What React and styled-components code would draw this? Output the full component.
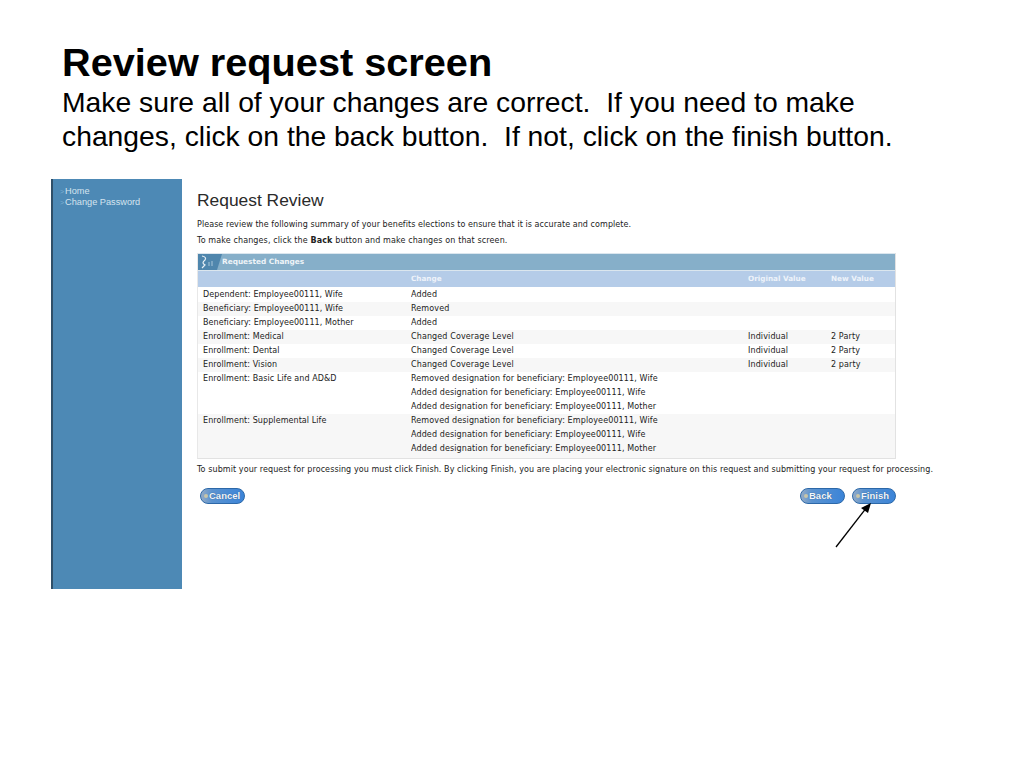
import React from "react";
import styled, { createGlobalStyle } from "styled-components";

const Global = createGlobalStyle`
  html, body { margin: 0; padding: 0; background: #fff; }
  body { font-family: "Liberation Sans", Arial, sans-serif; color: #000; }
`;
const Slide = styled.div`
  position: relative; width: 1024px; height: 768px; overflow: hidden; background: #fff;
  display: flex; flex-direction: column;
`;
const Intro = styled.header`padding: 39px 0 0 62px; height: 179px; box-sizing: border-box;`;
const Heading = styled.h1`margin: 0; font-size: 39.7px; line-height: 46px; font-weight: 700; color: #000;`;
const Lead = styled.p`margin: 0; width: 950px; font-size: 28.3px; line-height: 34px; white-space: pre-wrap; color: #000;`;
const Screen = styled.div`display: flex; margin-left: 51px; height: 410px;`;
const Sidebar = styled.nav`
  width: 131px; flex: none; background: #4d89b5; border-left: 2px solid #2f4f68; padding: 7px 0 0 7px; box-sizing: border-box;
  margin-right: 15px;
`;
const NavLink = styled.div`
  font: 9.2px/11px "Liberation Sans", Arial, sans-serif; color: #d5e4ef; white-space: nowrap;
  &::before { content: ">"; color: #7fb0d2; margin-right: 1px; font-size: 7px; }
`;
const Main = styled.main`width: 750px; flex: none; font: 8px/14px "DejaVu Sans", Verdana, sans-serif; color: #222;`;
const Title = styled.h2`margin: 11px 0 0; font: 400 17.4px/20px "Liberation Sans", Arial, sans-serif; color: #2a2a2a;`;
const Para = styled.p`margin: ${p => p.$top || 0}px 0 0; font-size: 8px; line-height: 14px; white-space: nowrap; color: #222; letter-spacing: ${p => p.$ls || 0}px;`;
const Panel = styled.section`width: 699px; margin-top: 5px; border-right: 1px solid #e2e2e2; border-bottom: 1px solid #e2e2e2; border-left: 1px solid #e8e8e8; box-sizing: border-box;`;
const TitleBar = styled.div`
  height: 16px; background: #86afc9; border-top: 1px solid #dbe6ee; display: flex; align-items: center;
  color: #eef4f8; font-weight: 700; font-size: 7.35px;
`;
const Badge = styled.svg`width: 24px; height: 16px; flex: none;`;
const Grid = styled.div`display: grid; grid-template-columns: 213px 337px 83px 64px; border-top: 1px solid #dbe6ee;`;
const Head = styled.div`
  height: 16px; line-height: 16px; background: #b5cce8; color: #eef3fa; font-weight: 700; font-size: 7.25px;
  white-space: nowrap; margin-bottom: 1px;
`;
const Cell = styled.div`
  height: ${p => p.$h || 14}px; line-height: 14px; padding-left: ${p => p.$pad || 0}px; background: ${p => (p.$alt ? "#f7f7f7" : "#fff")};
  white-space: pre; letter-spacing: ${p => (p.$pad ? 0.08 : 0.12)}px; overflow: hidden; color: #222;
`;
const Actions = styled.div`display: flex; justify-content: space-between; width: 699px; margin-top: 11px; padding-left: 3px; box-sizing: border-box;`;
const Group = styled.div`display: flex; gap: 7px;`;
const Pill = styled.button`
  position: relative; height: 16px; width: ${p => p.$w}px; border: 1px solid #2c68a8; border-radius: 8px; padding: 0 0 0 8px; margin: 0;
  background: linear-gradient(90deg, #94abc6 0, #5b93d0 25%, #3b84d8 100%);
  color: #f2f6fb; font: 700 9.5px/14px "Liberation Sans", Arial, sans-serif; text-align: left; box-sizing: border-box;
  text-shadow: 0 0 1px #24507f;
  &::before { content: ""; position: absolute; left: 3px; top: 5px; width: 4px; height: 4px; border-radius: 50%; background: #c9c6a8; }
`;
const Arrow = styled.svg`position: absolute; left: 830px; top: 498px; width: 50px; height: 54px;`;

const rows = [
  ["Dependent: Employee00111, Wife", "Added", "", ""],
  ["Beneficiary: Employee00111, Wife", "Removed", "", ""],
  ["Beneficiary: Employee00111, Mother", "Added", "", ""],
  ["Enrollment: Medical", "Changed Coverage Level", "Individual", "2 Party"],
  ["Enrollment: Dental", "Changed Coverage Level", "Individual", "2 Party"],
  ["Enrollment: Vision", "Changed Coverage Level", "Individual", "2 party"],
  ["Enrollment: Basic Life and AD&D", "Removed designation for beneficiary: Employee00111, Wife\nAdded designation for beneficiary: Employee00111, Wife\nAdded designation for beneficiary: Employee00111, Mother", "", "", 42],
  ["Enrollment: Supplemental Life", "Removed designation for beneficiary: Employee00111, Wife\nAdded designation for beneficiary: Employee00111, Wife\nAdded designation for beneficiary: Employee00111, Mother", "", "", 44],
];

export default function App() {
  return (
    <Slide>
      <Global />
      <Intro>
        <Heading>Review request screen</Heading>
        <Lead>{"Make sure all of your changes are correct.  If you need to make\nchanges, click on the back button.  If not, click on the finish button."}</Lead>
      </Intro>
      <Screen>
        <Sidebar>
          <NavLink>Home</NavLink>
          <NavLink>Change Password</NavLink>
        </Sidebar>
        <Main>
          <Title>Request Review</Title>
          <Para $top={8} $ls={0.065}>Please review the following summary of your benefits elections to ensure that it is accurate and complete.</Para>
          <Para $top={2} $ls={0.12}>To make changes, click the <b>Back</b> button and make changes on that screen.</Para>
          <Panel>
            <TitleBar>
              <Badge viewBox="0 0 24 16">
                <rect width="19" height="16" fill="#4f86ad" />
                <path d="M19 0 L24 0 L19 16 Z" fill="#4f86ad" />
                <path d="M4 2 Q9 3 7 6 Q3 9 7 11 L4 14" stroke="#e8f0f6" strokeWidth="1.2" fill="none" />
                <path d="M11 8v4M14 7v5" stroke="#a9c6da" strokeWidth="1" />
              </Badge>
              Requested Changes
            </TitleBar>
            <Grid>
              <Head />
              <Head>Change</Head>
              <Head>Original Value</Head>
              <Head>New Value</Head>
              {rows.map((r, i) => (
                <React.Fragment key={i}>
                  <Cell $alt={i % 2 === 1} $h={r[4]} $pad={5}>{r[0]}</Cell>
                  <Cell $alt={i % 2 === 1} $h={r[4]}>{r[1]}</Cell>
                  <Cell $alt={i % 2 === 1} $h={r[4]}>{r[2]}</Cell>
                  <Cell $alt={i % 2 === 1} $h={r[4]}>{r[3]}</Cell>
                </React.Fragment>
              ))}
            </Grid>
          </Panel>
          <Para $top={4} $ls={0.085}>To submit your request for processing you must click Finish. By clicking Finish, you are placing your electronic signature on this request and submitting your request for processing.</Para>
          <Actions>
            <Group><Pill $w={45}>Cancel</Pill></Group>
            <Group><Pill $w={45}>Back</Pill><Pill $w={44}>Finish</Pill></Group>
          </Actions>
        </Main>
      </Screen>
      <Arrow viewBox="0 0 50 54">
        <path d="M6 49 L37 9" stroke="#000" strokeWidth="1.3" />
        <path d="M41 5 L38 15 L31 10 Z" fill="#000" />
      </Arrow>
    </Slide>
  );
}
